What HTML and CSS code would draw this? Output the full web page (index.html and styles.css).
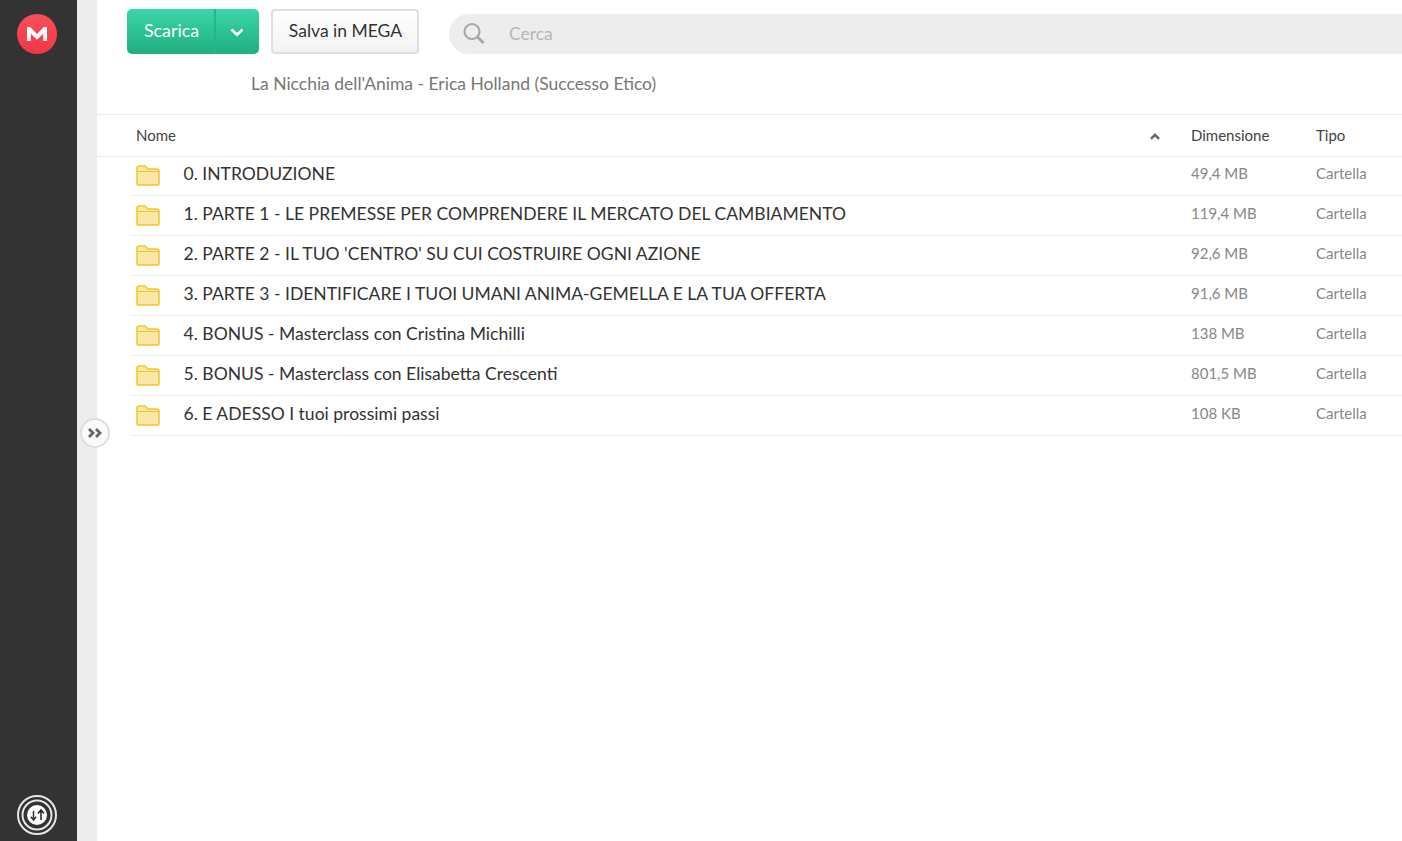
FILE: index.html
```html
<!DOCTYPE html>
<html lang="it">
<head>
<meta charset="utf-8">
<title>La Nicchia dell'Anima</title>
<link rel="stylesheet" href="styles.css">
</head>
<body>
<div class="app">
  <nav class="rail">
    <div class="logo">
      <svg width="22" height="16" viewBox="0 0 22 16"><path d="M1 15V1h3.200L11 8 17.800 1H21v14h-3.800V7.800L11 13.800 4.800 7.800V15z" fill="#fff"/></svg>
    </div>
    <div class="transfer">
      <svg width="40" height="40" viewBox="0 0 40 40">
        <circle cx="20" cy="20" r="19" fill="none" stroke="#e6e6e6" stroke-width="2"/>
        <circle cx="20" cy="20" r="14.500" fill="none" stroke="#e6e6e6" stroke-width="2"/>
        <circle cx="20" cy="20" r="10" fill="#fff"/>
        <path d="M16.500 16v9M13.800 21.800l2.700 3.200 2.700-3.200" fill="none" stroke="#333" stroke-width="1.500"/>
        <path d="M24 25V15M21 18.500l3-3.500 3 3.500" fill="none" stroke="#222" stroke-width="1.500"/>
      </svg>
    </div>
  </nav>
  <aside class="strip">
    <button class="toggle" type="button">
      <svg width="16" height="12" viewBox="0 0 16 12"><path d="M2 2l4 4-4 4M9 2l4 4-4 4" fill="none" stroke="#666" stroke-width="2.800"/></svg>
    </button>
  </aside>
  <main class="main">
    <header class="top">
      <div class="actions">
        <div class="btn-download">
          <span class="btn-label">Scarica</span>
          <span class="btn-arrow"><svg width="14" height="9" viewBox="0 0 14 9"><path d="M1.500 1.500L7 6.800l5.500-5.300" fill="none" stroke="#fff" stroke-width="2.600"/></svg></span>
        </div>
        <div class="btn-save">Salva in MEGA</div>
        <div class="search">
          <svg width="26" height="26" viewBox="0 0 26 26"><circle cx="11" cy="10.500" r="7.500" fill="none" stroke="#a8a8a8" stroke-width="2.200"/><path d="M16.500 16l6 6" stroke="#a8a8a8" stroke-width="3"/></svg>
          <span class="search-text">Cerca</span>
        </div>
      </div>
      <div class="title">La Nicchia dell'Anima - Erica Holland (Successo Etico)</div>
    </header>
    <section class="table">
      <div class="row head">
        <div class="c-icon-name">Nome</div>
        <div class="c-sort"><svg width="10" height="7" viewBox="0 0 10 7"><path d="M1 5.800L5 1.800l4 4" fill="none" stroke="#666" stroke-width="2.400"/></svg></div>
        <div class="c-size">Dimensione</div>
        <div class="c-type">Tipo</div>
      </div>
      <div class="row item first"><div class="c-folder"><svg class="folder" viewBox="0 0 24 21"><path d="M1 3a2 2 0 0 1 2-2h6l3 3h9a2 2 0 0 1 2 2v13a1 1 0 0 1-1 1H2a1 1 0 0 1-1-1z" fill="#f9e7a6" stroke="#f2c52e" stroke-width="1.500"/><path d="M1 6.500h22" stroke="#f2c52e" stroke-width="1"/></svg></div><div class="c-name">0. INTRODUZIONE</div><div class="c-size">49,4 MB</div><div class="c-type">Cartella</div></div>
      <div class="row item"><div class="c-folder"><svg class="folder" viewBox="0 0 24 21"><path d="M1 3a2 2 0 0 1 2-2h6l3 3h9a2 2 0 0 1 2 2v13a1 1 0 0 1-1 1H2a1 1 0 0 1-1-1z" fill="#f9e7a6" stroke="#f2c52e" stroke-width="1.500"/><path d="M1 6.500h22" stroke="#f2c52e" stroke-width="1"/></svg></div><div class="c-name">1. PARTE 1 - LE PREMESSE PER COMPRENDERE IL MERCATO DEL CAMBIAMENTO</div><div class="c-size">119,4 MB</div><div class="c-type">Cartella</div></div>
      <div class="row item"><div class="c-folder"><svg class="folder" viewBox="0 0 24 21"><path d="M1 3a2 2 0 0 1 2-2h6l3 3h9a2 2 0 0 1 2 2v13a1 1 0 0 1-1 1H2a1 1 0 0 1-1-1z" fill="#f9e7a6" stroke="#f2c52e" stroke-width="1.500"/><path d="M1 6.500h22" stroke="#f2c52e" stroke-width="1"/></svg></div><div class="c-name">2. PARTE 2 - IL TUO 'CENTRO' SU CUI COSTRUIRE OGNI AZIONE</div><div class="c-size">92,6 MB</div><div class="c-type">Cartella</div></div>
      <div class="row item"><div class="c-folder"><svg class="folder" viewBox="0 0 24 21"><path d="M1 3a2 2 0 0 1 2-2h6l3 3h9a2 2 0 0 1 2 2v13a1 1 0 0 1-1 1H2a1 1 0 0 1-1-1z" fill="#f9e7a6" stroke="#f2c52e" stroke-width="1.500"/><path d="M1 6.500h22" stroke="#f2c52e" stroke-width="1"/></svg></div><div class="c-name">3. PARTE 3 - IDENTIFICARE I TUOI UMANI ANIMA-GEMELLA E LA TUA OFFERTA</div><div class="c-size">91,6 MB</div><div class="c-type">Cartella</div></div>
      <div class="row item"><div class="c-folder"><svg class="folder" viewBox="0 0 24 21"><path d="M1 3a2 2 0 0 1 2-2h6l3 3h9a2 2 0 0 1 2 2v13a1 1 0 0 1-1 1H2a1 1 0 0 1-1-1z" fill="#f9e7a6" stroke="#f2c52e" stroke-width="1.500"/><path d="M1 6.500h22" stroke="#f2c52e" stroke-width="1"/></svg></div><div class="c-name">4. BONUS - Masterclass con Cristina Michilli</div><div class="c-size">138 MB</div><div class="c-type">Cartella</div></div>
      <div class="row item"><div class="c-folder"><svg class="folder" viewBox="0 0 24 21"><path d="M1 3a2 2 0 0 1 2-2h6l3 3h9a2 2 0 0 1 2 2v13a1 1 0 0 1-1 1H2a1 1 0 0 1-1-1z" fill="#f9e7a6" stroke="#f2c52e" stroke-width="1.500"/><path d="M1 6.500h22" stroke="#f2c52e" stroke-width="1"/></svg></div><div class="c-name">5. BONUS - Masterclass con Elisabetta Crescenti</div><div class="c-size">801,5 MB</div><div class="c-type">Cartella</div></div>
      <div class="row item"><div class="c-folder"><svg class="folder" viewBox="0 0 24 21"><path d="M1 3a2 2 0 0 1 2-2h6l3 3h9a2 2 0 0 1 2 2v13a1 1 0 0 1-1 1H2a1 1 0 0 1-1-1z" fill="#f9e7a6" stroke="#f2c52e" stroke-width="1.500"/><path d="M1 6.500h22" stroke="#f2c52e" stroke-width="1"/></svg></div><div class="c-name">6. E ADESSO I tuoi prossimi passi</div><div class="c-size">108 KB</div><div class="c-type">Cartella</div></div>
    </section>
  </main>
</div>
</body>
</html>
```
FILE: styles.css
```css
* { box-sizing: border-box; }
html, body { margin: 0; height: 100%; overflow: hidden; background: #fff; }
body { font-family: Lato, "Open Sans", sans-serif; color: #333; }
.app { display: flex; width: 1402px; height: 841px; }

.rail { width: 77px; flex: none; background: #333; display: flex; flex-direction: column; justify-content: space-between; align-items: center; padding: 14px 3px 6px 0; }
.logo { width: 40px; height: 40px; border-radius: 50%; background: linear-gradient(#f9505c, #f23644); display: flex; align-items: center; justify-content: center; }
.transfer { width: 40px; height: 40px; }
.transfer svg { display: block; }

.strip { width: 20px; flex: none; background: #ededed; position: relative; }
.toggle { position: absolute; left: 3px; top: 418px; width: 30px; height: 30px; padding: 0; border-radius: 50%; border: 2px solid #dedede; background: #fafafa; display: flex; align-items: center; justify-content: center; z-index: 2; }

.main { flex: 1; min-width: 0; }
.top { height: 115px; border-bottom: 1px solid #ededed; padding: 9px 0 0 30px; }
.actions { display: flex; align-items: flex-start; }
.btn-download { width: 132px; height: 45px; display: flex; border-radius: 5px; background: linear-gradient(#3bd6a8, #1fae7f); color: #fff; font-size: 17.800px; }
.btn-label { width: 89px; padding-left: 17px; line-height: 43px; border-right: 2px solid #26b58a; }
.btn-arrow { flex: 1; display: flex; align-items: center; justify-content: center; padding-top: 1px; padding-right: 1px; }
.btn-save { margin-left: 12px; width: 148px; height: 45px; border: 2px solid #dfdfdf; border-radius: 4px; background: linear-gradient(#fff, #f3f3f3); font-size: 17.500px; line-height: 39px; text-align: center; color: #333; padding-left: 1px; }
.search { margin: 5px 0 0 30px; flex: 1; height: 40px; border-radius: 20px 0 0 20px; background: #ededed; display: flex; align-items: center; padding-left: 12px; }
.search-text { margin-left: 22px; font-size: 17.500px; color: #b5b5b5; padding-bottom: 1px; }
.title { margin: 19px 0 0 124px; font-size: 17.500px; line-height: 22px; color: #777; }

.row { display: flex; align-items: center; }
.head { height: 42px; border-bottom: 1px solid #ededed; font-size: 15px; padding-left: 39px; padding-bottom: 1px; color: #444; }
.c-icon-name { width: 1007px; }
.c-sort { width: 48px; display: flex; align-items: center; }
.c-sort svg { margin-left: 7px; margin-top: 3px; }
.head .c-size, .head .c-type { color: #444; }
.c-size { width: 125px; flex: none; font-size: 15px; color: #888; }
.c-type { flex: 1; font-size: 15px; color: #888; }
.item { height: 40px; margin-left: 33px; border-bottom: 1px solid #ededed; padding: 0 0 6px 6px; }
.item.first { height: 39px; }
.c-folder { width: 47.500px; flex: none; display: flex; padding-top: 6px; }
.first .c-folder { padding-top: 5px; }
.folder { width: 24px; height: 21px; display: block; }
.c-name { width: 1007.500px; flex: none; font-size: 17.550px; line-height: 24px; padding-top: 3px; color: #333; }
.first .c-name { padding-top: 1px; }
```
